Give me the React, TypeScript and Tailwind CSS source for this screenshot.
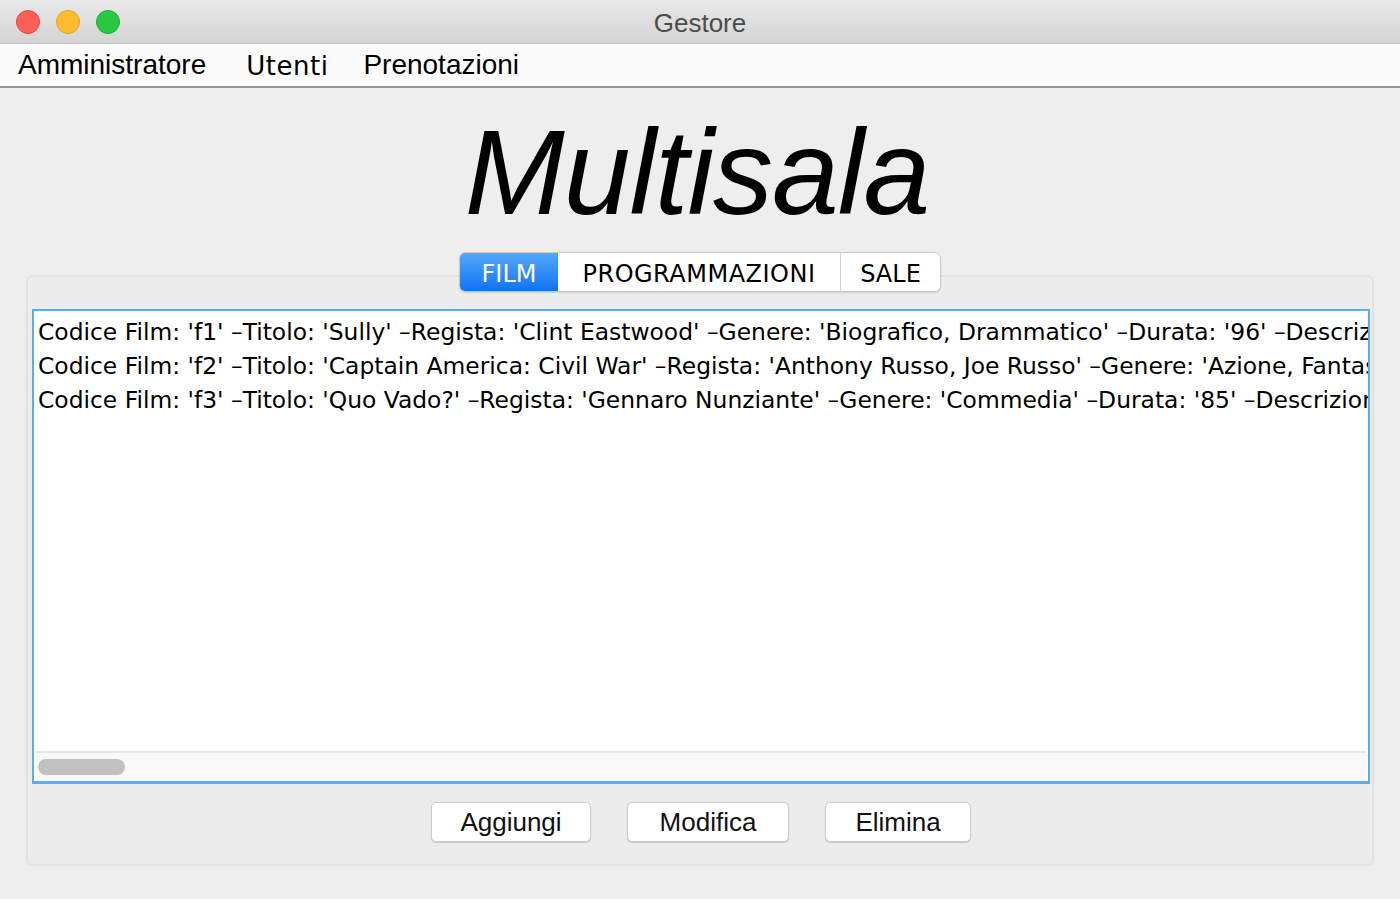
import React from 'react';

const films = [
  "Codice Film: 'f1' –Titolo: 'Sully' –Regista: 'Clint Eastwood' –Genere: 'Biografico, Drammatico' –Durata: '96' –Descrizione: 'La storia vera del capitano Chesley Sullenberger'",
  "Codice Film: 'f2' –Titolo: 'Captain America: Civil War' –Regista: 'Anthony Russo, Joe Russo' –Genere: 'Azione, Fantascienza' –Durata: '147' –Descrizione: ''",
  "Codice Film: 'f3' –Titolo: 'Quo Vado?' –Regista: 'Gennaro Nunziante' –Genere: 'Commedia' –Durata: '85' –Descrizione: ''",
];

const helv = { fontFamily: '"Liberation Sans", Arial, sans-serif' };
const lucida = { fontFamily: '"DejaVu Sans", "Noto Sans", sans-serif' };

function TrafficLights() {
  return (
    <div className="flex items-center gap-[16px] pl-[16px]">
      <div className="w-[24px] h-[24px] rounded-full bg-[#fe5f57] border border-[#e2463f]" />
      <div className="w-[24px] h-[24px] rounded-full bg-[#febc2e] border border-[#dfa123]" />
      <div className="w-[24px] h-[24px] rounded-full bg-[#28c840] border border-[#1dad2b]" />
    </div>
  );
}

export default function App() {
  const tabs = ['FILM', 'PROGRAMMAZIONI', 'SALE'];
  const buttons = [
    { label: 'Aggiungi', w: 'w-[160px]' },
    { label: 'Modifica', w: 'w-[162px]' },
    { label: 'Elimina', w: 'w-[146px]' },
  ];

  return (
    <div className="w-[1400px] h-[899px] overflow-hidden bg-[#eeeeee] flex flex-col">
      {/* title bar */}
      <div className="relative h-[44px] shrink-0 flex items-center bg-gradient-to-b from-[#e9e9e9] to-[#d4d4d4] border-b border-[#c4c4c4]">
        <TrafficLights />
        <div
          className="absolute inset-0 flex items-center justify-center pt-[3px] text-[26px] text-[#4b4b4b]"
          style={helv}
        >
          Gestore
        </div>
      </div>

      {/* menu bar */}
      <div className="h-[44px] shrink-0 flex items-center bg-[#fbfbfb] border-b-2 border-[#959595] text-black">
        <span className="ml-[18px] text-[28px]" style={helv}>Amministratore</span>
        <span className="ml-[40px] text-[26px] pt-[3px] tracking-[0.5px]" style={lucida}>Utenti</span>
        <span className="ml-[35px] text-[28px]" style={helv}>Prenotazioni</span>
      </div>

      {/* heading */}
      <div className="h-[164px] shrink-0 flex items-end justify-center pb-[20px] pr-[6px]">
        <span className="italic text-[120px] leading-none text-black tracking-[-1px]" style={helv}>
          Multisala
        </span>
      </div>

      {/* tabbed pane */}
      <div className="flex flex-col mx-[26px]">
        <div className="relative z-10 flex justify-center">
          <div className="flex h-[40px] rounded-[6px] border border-[#c9c9c9] bg-white shadow-[0_1px_1px_rgba(0,0,0,0.12)] overflow-hidden" style={lucida}>
            {tabs.map((t, i) => (
              <div
                key={t}
                className={
                  i === 0
                    ? 'w-[98px] flex items-center justify-center pt-[3px] text-[24px] text-white bg-gradient-to-b from-[#52a8fc] to-[#0f72f5]'
                    : i === 1
                    ? 'w-[283px] flex items-center justify-center pt-[3px] text-[24px] tracking-[0.5px] text-black border-r border-[#d4d4d4]'
                    : 'w-[99px] flex items-center justify-center pt-[3px] text-[24px] text-black'
                }
              >
                {t}
              </div>
            ))}
          </div>
        </div>

        <div className="-mt-[17px] h-[591px] rounded-[6px] border-2 border-[#e2e2e2] bg-[#ececec] flex flex-col pt-[32px] pl-[4px] pr-[2px]">
          {/* text area */}
          <div className="h-[475px] border-2 border-b-[3px] border-[#5eabf1] bg-white flex flex-col">
            <div className="flex-1 overflow-hidden pt-[4px] pl-[4px]" style={lucida}>
              {films.map((f) => (
                <div key={f} className="whitespace-nowrap text-[23.4px] leading-[34px] text-black">
                  {f}
                </div>
              ))}
            </div>
            <div className="h-[30px] mx-[2px] border-t-2 border-[#e6e6e6] bg-[#f9f9f9] flex items-center pl-[2px]">
              <div className="w-[87px] h-[16px] rounded-full bg-[#c1c1c1]" />
            </div>
          </div>

          {/* buttons */}
          <div className="flex justify-center gap-[36px] mt-[18px]" style={helv}>
            {buttons.map((b) => (
              <div
                key={b.label}
                className={`${b.w} h-[40px] flex items-center justify-center pt-[1px] rounded-[5px] bg-white border border-[#cacaca] shadow-[0_1px_1px_rgba(0,0,0,0.15)] text-[26px] text-[#111]`}
              >
                {b.label}
              </div>
            ))}
          </div>
        </div>
      </div>
    </div>
  );
}
